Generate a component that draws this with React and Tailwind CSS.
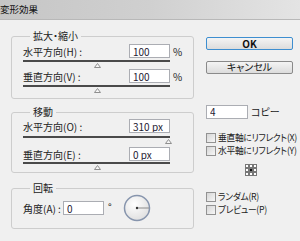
import React from 'react'

const Field = ({ value, className = '' }) => (
  <input
    readOnly
    defaultValue={value}
    className={`h-[14px] w-[41px] border border-[#abadb3] bg-white px-[3px] text-[10px] leading-none text-[#1e2233] outline-none ${className}`}
  />
)

const Thumb = ({ pos }) => (
  <svg width="7" height="5" viewBox="0 0 7 5" className={`absolute top-[3px] ${pos}`}>
    <polygon points="3.5,0.5 6.5,4.5 0.5,4.5" fill="#f6f6f6" stroke="#8f8f8f" strokeWidth="1" />
  </svg>
)

// one labelled value with its slider underneath
const SliderRow = ({ label, value, unit, thumb, gapTop, trackH }) => (
  <div>
    <div className="flex h-[14px] items-center">
      <span className="flex-1">{label}</span>
      <Field value={value} />
      <span className="ml-[3px] w-[20px]">{unit}</span>
    </div>
    <div className={`relative mr-[23px] ${gapTop} ${trackH}`}>
      <div className="mt-[1px] h-[2px] bg-[#4a4a4a]" />
      <Thumb pos={thumb} />
    </div>
  </div>
)

const Group = ({ title, className = '', children }) => (
  <fieldset className={`rounded-[3px] border border-[#cdcdcd] pl-[11px] ${className}`}>
    <legend className="ml-[7px] px-[3px] leading-[12px]">{title}</legend>
    {children}
  </fieldset>
)

const Check = ({ label }) => (
  <div className="flex h-[13px] items-center whitespace-nowrap">
    <span className="mr-[2px] h-[10px] w-[10px] shrink-0 border border-[#929292] bg-gradient-to-br from-[#d6d6d6] to-[#f7f7f7]" />
    <span className="inline-block origin-left scale-x-[0.92] text-[9.5px] tracking-[-0.3px]">{label}</span>
  </div>
)

const Button = ({ children, focused }) => (
  <button
    className={`h-[13px] w-[87px] rounded-[2px] border bg-gradient-to-b from-[#f4f4f4] to-[#dcdcdc] text-[10px] leading-none text-[#111] ${
      focused ? 'border-[#3d8ed0]' : 'border-[#8a8a8a]'
    }`}
  >
    {children}
  </button>
)

const RefPoint = () => (
  <svg width="13" height="13" viewBox="0 0 13 13">
    {[0, 1, 2].map((r) =>
      [0, 1, 2].map((c) => (
        <rect
          key={`${r}-${c}`}
          x={c * 4 + 0.5}
          y={r * 4 + 0.5}
          width="3"
          height="3"
          fill={r === 1 && c === 1 ? '#111' : '#fff'}
          stroke="#777"
          strokeWidth="1"
        />
      ))
    )}
  </svg>
)

const Dial = () => (
  <svg width="28" height="28" viewBox="0 0 28 28">
    <defs>
      <radialGradient id="dialFill" cx="40%" cy="35%" r="70%">
        <stop offset="0%" stopColor="#ffffff" />
        <stop offset="100%" stopColor="#dedede" />
      </radialGradient>
    </defs>
    <circle cx="14" cy="14" r="12.5" fill="url(#dialFill)" stroke="#8795ad" strokeWidth="1.5" />
    <line x1="14" y1="14" x2="26" y2="14" stroke="#8a8a8a" strokeWidth="1" />
    <circle cx="14" cy="14" r="1.2" fill="#333" />
  </svg>
)

export default function App() {
  return (
    <div className="h-[241px] w-[300px] overflow-hidden bg-[#f0f0f0] font-['Noto_Sans_CJK_JP',sans-serif] text-[10px] text-[#222] [font-feature-settings:'palt']">
      <div className="flex h-[20px] items-center border-b border-[#b8b8b8] bg-gradient-to-r from-[#c6c6c6] via-[#d0d0d0] to-[#e4e4e4] text-[9.5px] text-[#111]">
        変形効果
      </div>

      <div className="flex pl-[11px] pt-[10px]">
        <div className="flex w-[183px] flex-col">
          <Group title="拡大・縮小" className="pb-[4px] pt-[2px]">
            <SliderRow label="水平方向(H) :" value="100" unit="%" thumb="left-[71px]" gapTop="mt-[2px]" trackH="h-[9px]" />
            <SliderRow label="垂直方向(V) :" value="100" unit="%" thumb="left-[71px]" gapTop="mt-[2px]" trackH="h-[9px]" />
          </Group>

          <Group title="移動" className="mt-[7px] pb-[1px] pt-[1px]">
            <SliderRow label="水平方向(O) :" value="310 px" unit="" thumb="left-[142px]" gapTop="mt-[3px]" trackH="h-[11px]" />
            <SliderRow label="垂直方向(E) :" value="0 px" unit="" thumb="left-[71px]" gapTop="mt-[1px]" trackH="h-[9px]" />
          </Group>

          <Group title="回転" className="mt-[9px] pb-[6px] pl-[10px]">
            <div className="flex h-[28px] items-center">
              <span className="w-[40px]">角度(A) :</span>
              <Field value="0" />
              <span className="-mt-[3px] ml-[4px]">°</span>
              <div className="ml-[11px]">
                <Dial />
              </div>
            </div>
          </Group>
        </div>

        <div className="ml-[12px] flex w-[87px] flex-col pt-[7px]">
          <Button focused>
            <span className="font-bold">OK</span>
          </Button>
          <div className="mt-[9px]">
            <Button>キャンセル</Button>
          </div>

          <div className="mt-[30px] flex items-center">
            <Field value="4" className="w-[42px]" />
            <span className="ml-[3px]">コピー</span>
          </div>

          <div className="mt-[12px] flex flex-col">
            <Check label="垂直軸にリフレクト(X)" />
            <Check label="水平軸にリフレクト(Y)" />
          </div>

          <div className="ml-[39px] mt-[7px]">
            <RefPoint />
          </div>

          <div className="mt-[13px] flex flex-col">
            <Check label="ランダム(R)" />
            <Check label="プレビュー(P)" />
          </div>
        </div>
      </div>
    </div>
  )
}
